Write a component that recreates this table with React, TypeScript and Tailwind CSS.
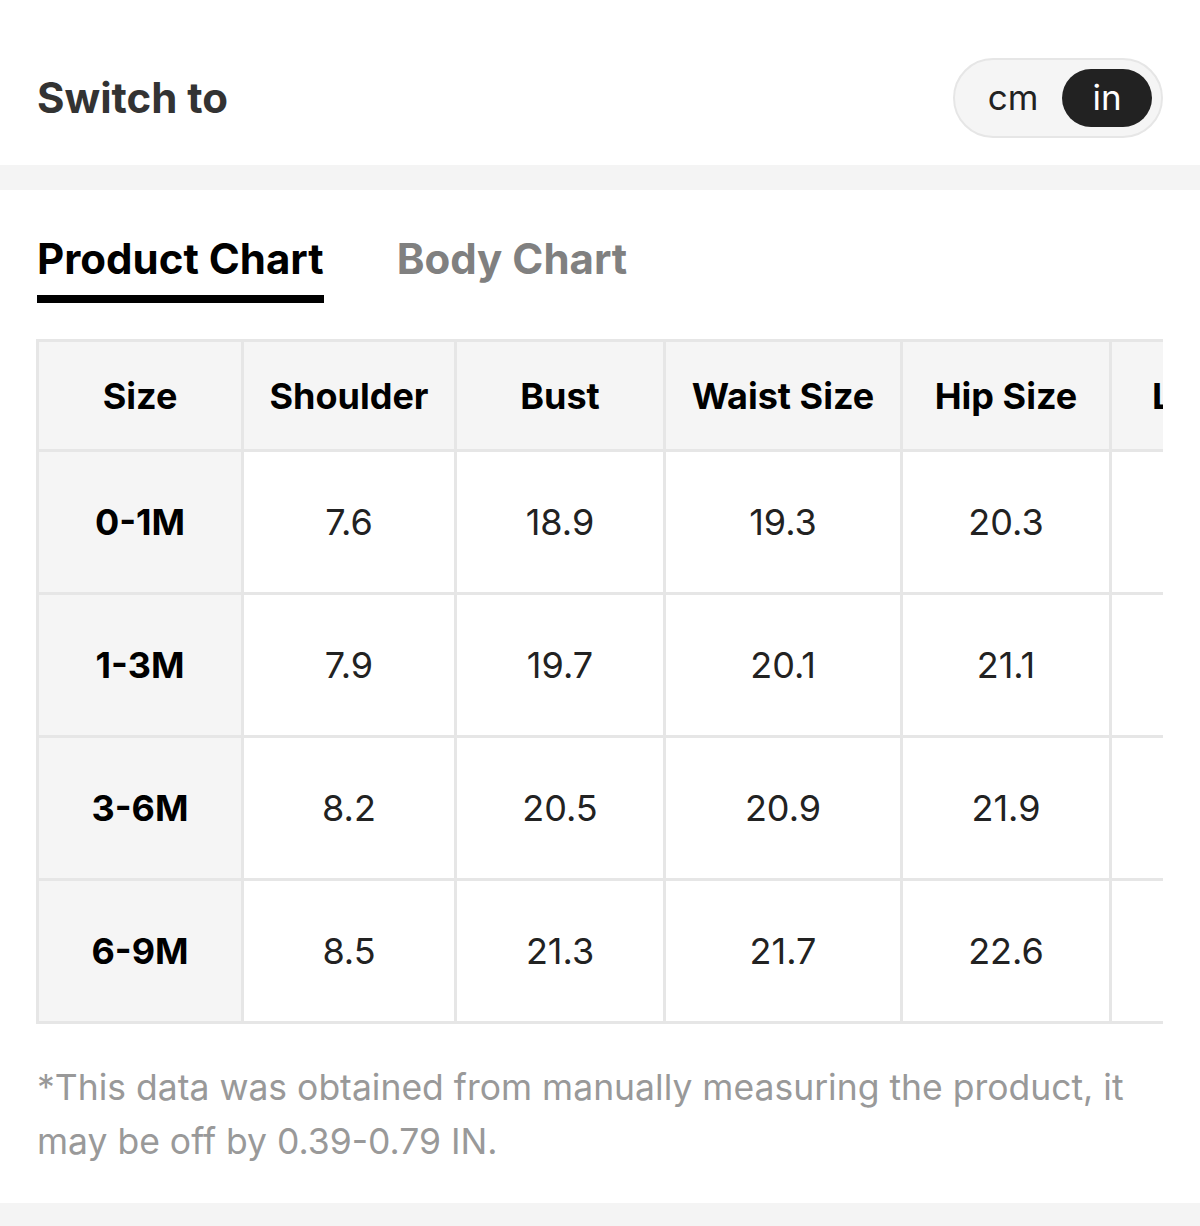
import React from "react";

const rows = [
  { size: "0-1M", vals: ["7.6", "18.9", "19.3", "20.3"] },
  { size: "1-3M", vals: ["7.9", "19.7", "20.1", "21.1"] },
  { size: "3-6M", vals: ["8.2", "20.5", "20.9", "21.9"] },
  { size: "6-9M", vals: ["8.5", "21.3", "21.7", "22.6"] },
];

const cols = ["Shoulder", "Bust", "Waist Size", "Hip Size"];
const widths = ["w-[213px]", "w-[209px]", "w-[237px]", "w-[209px]"];

export default function App() {
  return (
    <div className="w-[1200px] h-[1226px] bg-white font-['Inter',sans-serif] overflow-hidden">
      {/* unit switch */}
      <div className="h-[165px] pt-[30px] flex items-center justify-between pl-[37px] pr-[37px]">
        <h2 className="text-[42px] font-bold text-[#333]">Switch to</h2>
        <div className="flex items-center h-[80px] w-[210px] rounded-full border-2 border-[#e6e6e6] bg-[#f5f5f5] px-[9px]">
          <span className="flex-1 text-center text-[35px] text-[#222]">cm</span>
          <span className="w-[90px] h-[58px] rounded-full bg-[#222] text-white text-[35px] flex items-center justify-center">
            in
          </span>
        </div>
      </div>
      <div className="h-[25px] bg-[#f4f4f4]" />

      {/* tabs */}
      <div className="flex gap-[73px] pl-[37px] pt-[43px]">
        <div className="flex flex-col">
          <span className="text-[42px] font-bold text-black leading-[52px]">Product Chart</span>
          <div className="h-[8px] bg-black mt-[10px]" />
        </div>
        <span className="text-[42px] font-bold text-[#808080] leading-[52px]">Body Chart</span>
      </div>

      {/* chart */}
      <div className="ml-[36px] mr-[37px] mt-[36px] overflow-hidden">
        <table className="table-fixed w-[1273px] border-collapse border-[3px] border-[#e6e6e6] text-[36px] whitespace-nowrap">
          <thead>
            <tr className="h-[110px] bg-[#f5f5f5]">
              <th className="w-[205px] border-[3px] border-[#e6e6e6] font-bold text-black">Size</th>
              {cols.map((c, i) => (
                <th key={c} className={`${widths[i]} border-[3px] border-[#e6e6e6] font-bold text-black`}>
                  {c}
                </th>
              ))}
              <th className="w-[200px] border-[3px] border-[#e6e6e6] font-bold text-black text-left pl-[40px]">
                Length
              </th>
            </tr>
          </thead>
          <tbody>
            {rows.map((r) => (
              <tr key={r.size} className="h-[143px]">
                <td className="border-[3px] border-[#e6e6e6] bg-[#f5f5f5] text-center font-bold text-black">
                  {r.size}
                </td>
                {r.vals.map((v, i) => (
                  <td key={i} className="border-[3px] border-[#e6e6e6] text-center text-[#222]">
                    {v}
                  </td>
                ))}
                <td className="border-[3px] border-[#e6e6e6]" />
              </tr>
            ))}
          </tbody>
        </table>
      </div>

      <p className="px-[37px] mt-[37px] text-[35.5px] leading-[54px] text-[#999]">
        *This data was obtained from manually measuring the product, it may be off by 0.39-0.79 IN.
      </p>
      <div className="mt-[34px] h-[30px] bg-[#f4f4f4]" />
    </div>
  );
}
